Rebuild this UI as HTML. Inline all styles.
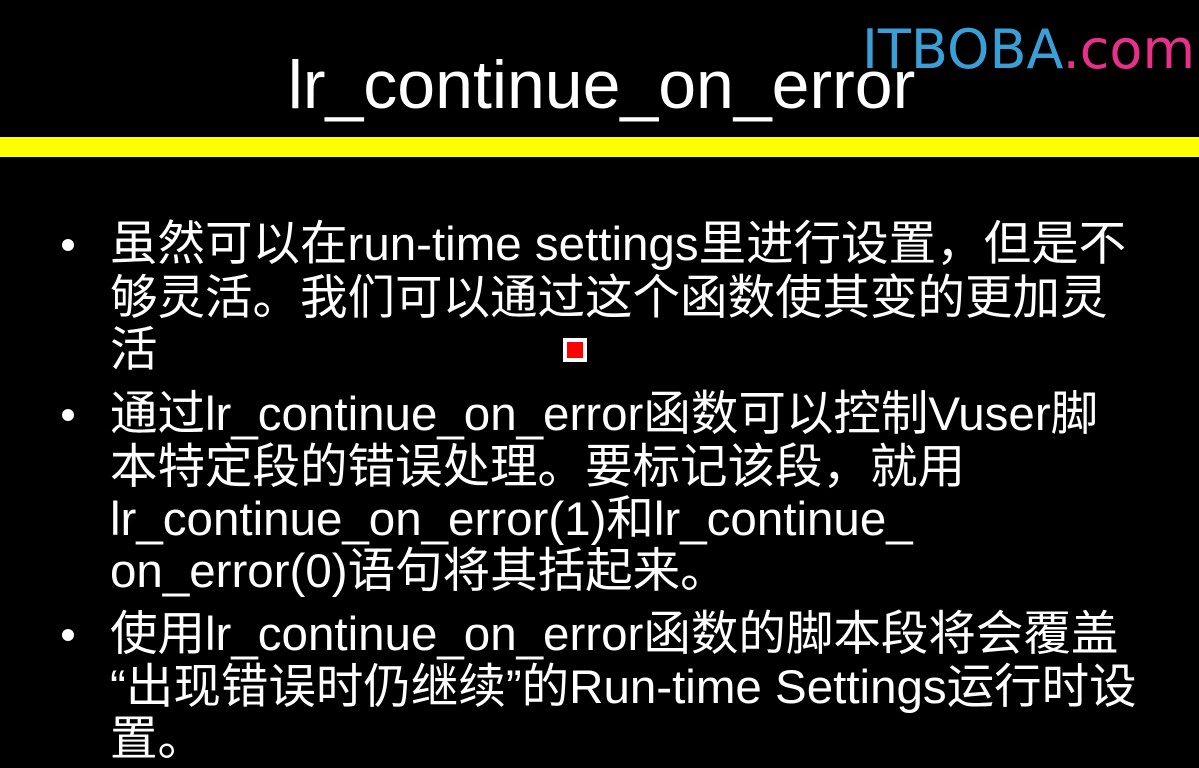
<!DOCTYPE html>
<html><head><meta charset="utf-8"><style>
html,body{margin:0;padding:0;background:#000;width:1199px;height:768px;overflow:hidden;position:relative}
.t{position:absolute;color:#fff;font-family:"Liberation Sans","Noto Sans CJK SC",sans-serif;white-space:nowrap}
.title{left:0;width:1199px;text-align:center;top:45px;font-size:68px;line-height:80px;padding-left:4px;box-sizing:border-box}
.bar{position:absolute;left:0;top:137px;width:1199px;height:20px;background:#ffff00}
.logo{position:absolute;left:862px;top:18px;font-family:"DejaVu Sans","Liberation Sans",sans-serif;font-size:54px;line-height:64px;white-space:nowrap;letter-spacing:0px}
.l{left:110px;font-size:47.5px;line-height:52px}
.b{position:absolute;left:62px;width:12px;height:12px;border-radius:50%;background:#fff}
</style></head><body>
<div class="logo"><span style="color:#3a9fd6">ITBOBA</span><span style="color:#e8308a">.com</span></div>
<div class="t title">lr_continue_on_error</div>
<div class="bar"></div>
<div class="b" style="top:239px"></div>
<div class="t l" style="top:219px">虽然可以在run-time settings里进行设置，但是不</div>
<div class="t l" style="top:273px">够灵活。我们可以通过这个函数使其变的更加灵</div>
<div class="t l" style="top:325px">活</div>
<div style="position:absolute;left:563px;top:338px;width:24px;height:24px;background:#fff;"></div>
<div style="position:absolute;left:567px;top:342px;width:16px;height:16px;background:#f00;"></div>
<div class="b" style="top:409px"></div>
<div class="t l" style="top:389px">通过lr_continue_on_error函数可以控制Vuser脚</div>
<div class="t l" style="top:442px">本特定段的错误处理。要标记该段，就用</div>
<div class="t l" style="top:494px">lr_continue_on_error(1)和lr_continue_</div>
<div class="t l" style="top:546px">on_error(0)语句将其括起来。</div>
<div class="b" style="top:629px"></div>
<div class="t l" style="top:609px">使用lr_continue_on_error函数的脚本段将会覆盖</div>
<div class="t l" style="top:662px">“出现错误时仍继续”的Run-time Settings运行时设</div>
<div class="t l" style="top:714px">置。</div>
</body></html>
